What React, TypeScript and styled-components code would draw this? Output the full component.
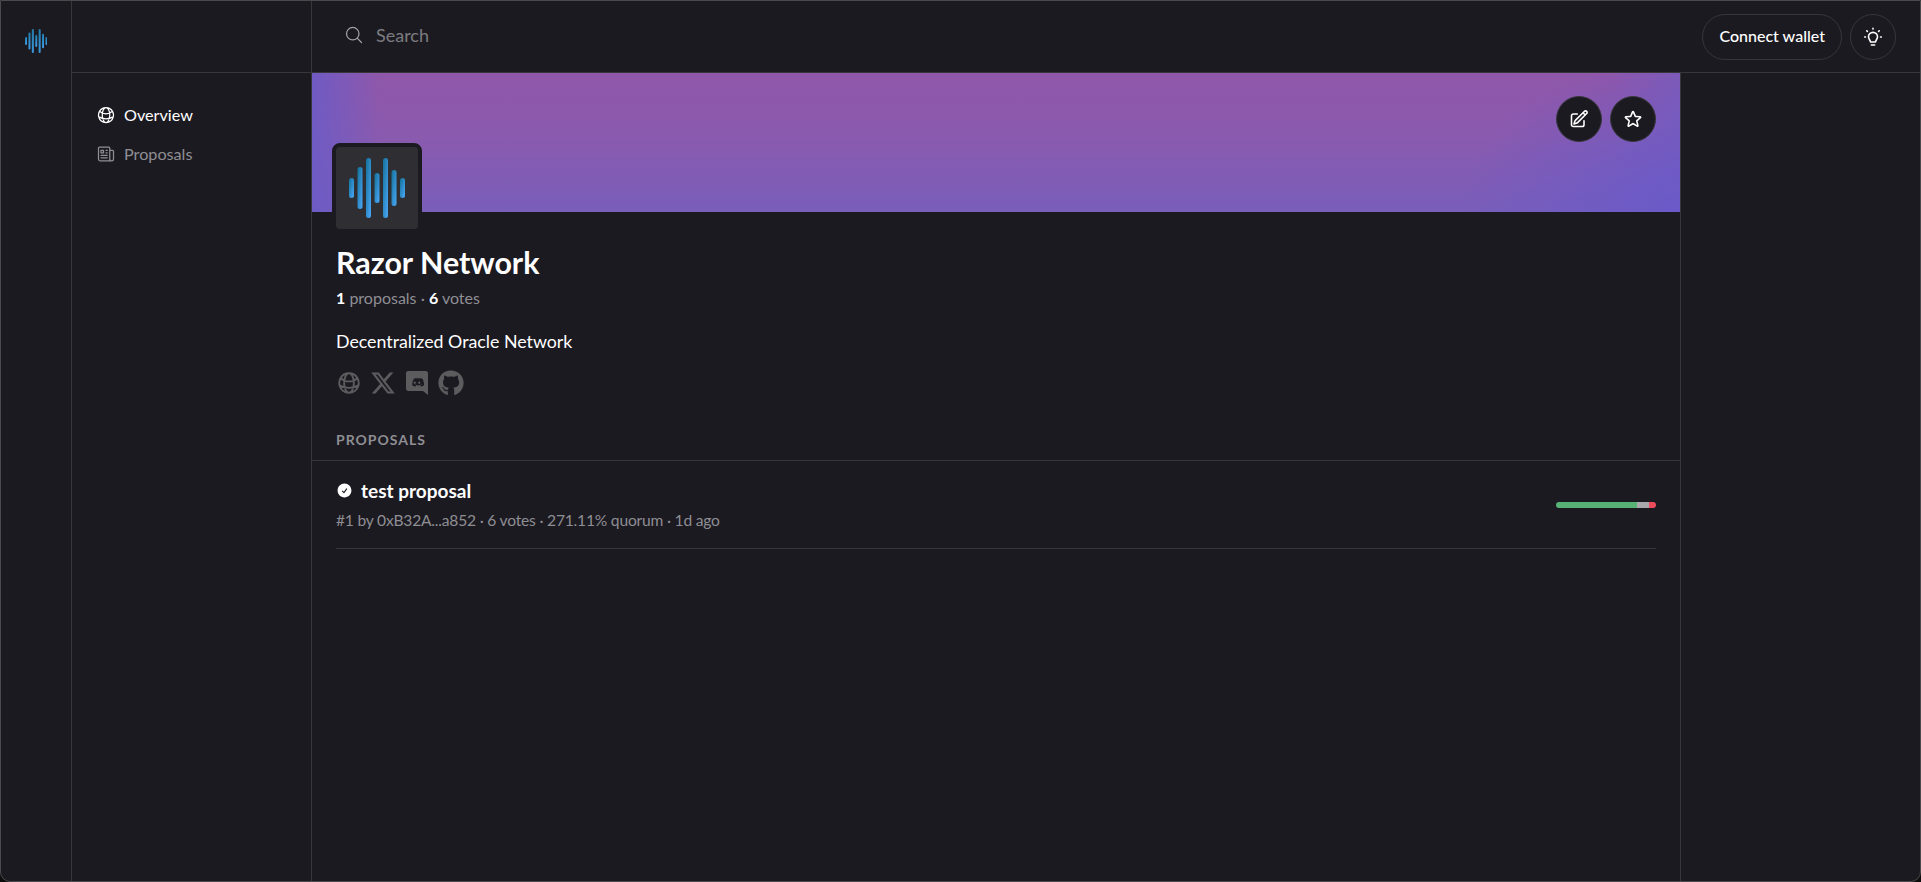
import { FC } from "react";
import styled, { createGlobalStyle } from "styled-components";
import {
  HiOutlineGlobeAlt,
  HiOutlineNewspaper,
  HiOutlineMagnifyingGlass,
  HiOutlinePencilSquare,
  HiOutlineStar,
  HiCheckCircle,
} from "react-icons/hi2";
import { FaXTwitter, FaGithub } from "react-icons/fa6";

const GlobalStyle = createGlobalStyle`
  html, body {
    margin: 0;
    padding: 0;
    background: #0c0c0d;
  }
  body {
    font-family: "Lato", "Liberation Sans", sans-serif;
    color: #fff;
  }
`;

const Page = styled.div`
  width: 1921px;
  height: 882px;
  box-sizing: border-box;
  display: flex;
  overflow: hidden;
  background: #1c1a21;
  border: 1px solid #4a4a4c;
  border-radius: 0 0 10px 10px;
`;

const Rail = styled.div`
  width: 71px;
  flex: none;
  box-sizing: border-box;
  border-right: 1px solid #37373a;
  display: flex;
  justify-content: center;
  padding-top: 28px;
`;

const Column = styled.div`
  flex: 1;
  min-width: 0;
  display: flex;
  flex-direction: column;
`;

const TopBar = styled.div`
  height: 72px;
  flex: none;
  box-sizing: border-box;
  border-bottom: 1px solid #37373a;
  display: flex;
  align-items: center;
`;

const TopSpacer = styled.div`
  width: 240px;
  height: 100%;
  flex: none;
  box-sizing: border-box;
  border-right: 1px solid #37373a;
`;

const SearchBox = styled.div`
  flex: 1;
  display: flex;
  align-items: center;
  gap: 12px;
  padding: 0 0 4px 32px;
  color: #7c7c80;
  font-size: 18px;
  svg {
    width: 20px;
    height: 20px;
    color: #a0a0a5;
  }
`;

const WalletButton = styled.button`
  height: 46px;
  padding: 0 16px 2px;
  background: transparent;
  border: 1px solid #37373a;
  border-radius: 23px;
  color: #fff;
  font: 500 16px "Lato", sans-serif;
`;

const ThemeButton = styled.button`
  width: 46px;
  height: 46px;
  margin: 0 24px 0 8px;
  padding: 0;
  display: flex;
  align-items: center;
  justify-content: center;
  background: transparent;
  border: 1px solid #37373a;
  border-radius: 50%;
  color: #fff;
`;

const Body = styled.div`
  flex: 1;
  display: flex;
  min-height: 0;
`;

const SideNav = styled.nav`
  width: 240px;
  flex: none;
  box-sizing: border-box;
  border-right: 1px solid #37373a;
  padding-top: 22px;
`;

const NavItem = styled.a<{ $active?: boolean }>`
  height: 39px;
  display: flex;
  align-items: center;
  gap: 8px;
  padding-left: 24px;
  font-size: 16.2px;
  color: ${(p) => (p.$active ? "#fff" : "#8e8e93")};
  svg {
    width: 20px;
    height: 20px;
  }
`;

const Main = styled.main`
  width: 1369px;
  flex: none;
  box-sizing: border-box;
  border-right: 1px solid #37373a;
`;

const Banner = styled.div`
  height: 139px;
  position: relative;
  background:
    linear-gradient(90deg, rgba(108, 91, 198, 0.9) 0%, rgba(108, 91, 198, 0) 5%),
    radial-gradient(ellipse 16% 110% at 100% 100%, #6a5ac8 0%, rgba(106, 90, 200, 0) 100%),
    linear-gradient(270deg, rgba(122, 91, 186, 0.8) 0%, rgba(122, 91, 186, 0) 5%),
    linear-gradient(180deg, #8f57aa 0%, #8a5aae 45%, #795eb9 100%);
`;

const BannerActions = styled.div`
  position: absolute;
  top: 23px;
  right: 24px;
  display: flex;
  gap: 8px;
`;

const RoundButton = styled.button`
  width: 46px;
  height: 46px;
  padding: 0;
  display: flex;
  align-items: center;
  justify-content: center;
  background: #1c1a21;
  border: 1px solid #37373a;
  border-radius: 50%;
  color: #fff;
  svg {
    width: 20px;
    height: 20px;
    stroke-width: 1.9;
  }
`;

const Avatar = styled.div`
  position: absolute;
  left: 20px;
  top: 70px;
  width: 90px;
  height: 90px;
  box-sizing: border-box;
  border: 4px solid #1c1a21;
  border-radius: 8px;
  background: #2f2f33;
  display: flex;
  align-items: center;
  justify-content: center;
`;

const Info = styled.div`
  padding: 32px 24px 0;
`;

const Title = styled.h1`
  margin: 0;
  font-size: 30.4px;
  line-height: 36px;
  font-weight: 700;
`;

const Stats = styled.div`
  margin-top: 7px;
  font-size: 16px;
  line-height: 22px;
  color: #8e8e93;
  b {
    color: #fff;
    font-weight: 700;
  }
`;

const Description = styled.p`
  margin: 20px 0 0;
  font-size: 17.8px;
  line-height: 24px;
  color: #fff;
`;

const Socials = styled.div`
  margin-top: 17px;
  display: flex;
  align-items: center;
  gap: 8px;
  color: #5c5c5f;
  svg {
    width: 26px;
    height: 26px;
    display: block;
    stroke-width: 1.8;
  }
`;

const SectionLabel = styled.div`
  margin-top: 35px;
  padding: 0 24px 11px;
  font-size: 14px;
  line-height: 18px;
  font-weight: 700;
  letter-spacing: 1px;
  color: #8e8e93;
  border-bottom: 1px solid #37373a;
`;

const ProposalRow = styled.div`
  margin: 0 24px;
  height: 88px;
  box-sizing: border-box;
  border-bottom: 1px solid #37373a;
  display: flex;
  align-items: center;
  justify-content: space-between;
`;

const ProposalTitle = styled.div`
  display: flex;
  align-items: center;
  gap: 8px;
  font-size: 19px;
  line-height: 24px;
  font-weight: 700;
  svg {
    width: 17px;
    height: 17px;
  }
`;

const ProposalMeta = styled.div`
  margin-top: 6px;
  font-size: 15.6px;
  line-height: 22px;
  letter-spacing: -0.2px;
  color: #8e8e93;
`;

const VoteBar = styled.div`
  width: 100px;
  height: 6px;
  display: flex;
  overflow: hidden;
  border-radius: 3px;
`;

const VoteSegment = styled.div<{ $color: string; $size: number }>`
  width: ${(p) => p.$size}%;
  background: ${(p) => p.$color};
`;

const LogoWave: FC<{ height: number; id: string }> = ({ height, id }) => (
  <svg width={(height * 56) / 60} height={height} viewBox="0 0 56 60" fill={`url(#${id})`}>
    <defs>
      <linearGradient id={id} x1="0" y1="0" x2="1" y2="1">
        <stop offset="0" stopColor="#137096" />
        <stop offset="1" stopColor="#4ba8fa" />
      </linearGradient>
    </defs>
    <rect x="0" y="20" width="5" height="20" rx="2.5" />
    <rect x="8.5" y="9" width="5" height="42" rx="2.5" />
    <rect x="17" y="0" width="5" height="60" rx="2.5" />
    <rect x="25.5" y="15" width="5" height="30" rx="2.5" />
    <rect x="34" y="0" width="5" height="60" rx="2.5" />
    <rect x="42.5" y="12" width="5" height="36" rx="2.5" />
    <rect x="51" y="20" width="5" height="20" rx="2.5" />
  </svg>
);

const BulbIcon: FC = () => (
  <svg width="20" height="20" viewBox="0 0 24 24" fill="none" stroke="currentColor" strokeWidth="1.9" strokeLinecap="round" strokeLinejoin="round">
    <path d="M9 18c0-2-2.400-3-2.400-6.200a5.400 5.400 0 0 1 10.800 0c0 3.200-2.400 4.200-2.400 6.200z" />
    <path d="M10 21.500h4" />
    <path d="M12 1.500v1M4.500 4.500l.8.800M19.500 4.500l-.8.800M2 12h1M21 12h1" />
  </svg>
);

const DiscordIcon: FC = () => (
  <svg viewBox="-1 0 26 26" fill="currentColor">
    <path fillRule="evenodd" d="M3.200 1h17.600C22 1 23 2 23 3.200V25l-5-4H3.200C2 21 1 20 1 18.800V3.200C1 2 2 1 3.200 1zM15 15.500l.7.900c2.300-.1 3.400-1.500 3.400-1.500 0-3.300-1.500-6-1.500-6-1.500-1.100-2.900-1.100-2.900-1.100l-.2.200c1.700.5 2.500 1.300 2.500 1.300-2.400-1.300-5.600-1.300-8 0 0 0 .8-.8 2.700-1.300l-.1-.2s-1.400 0-2.900 1.100c0 0-1.500 2.700-1.500 6 0 0 1 1.400 3.400 1.500l.7-.9c-1.300-.4-1.800-1.200-1.800-1.200 2.400 1.500 5.400 1.500 7.800 0 0 0-.5.800-1.800 1.200zM9.700 11.600c-.6 0-1.100.6-1.100 1.200s.5 1.200 1.100 1.200 1.100-.6 1.100-1.200-.5-1.200-1.100-1.200zm4.600 0c-.6 0-1.100.6-1.100 1.200s.5 1.200 1.100 1.200 1.100-.6 1.100-1.200-.5-1.200-1.100-1.200z" />
  </svg>
);

const App: FC = () => {
  return (
    <>
      <GlobalStyle />
      <Page>
        <Rail>
          <LogoWave height={24} id="railWave" />
        </Rail>
        <Column>
          <TopBar>
            <TopSpacer />
            <SearchBox>
              <HiOutlineMagnifyingGlass />
              Search
            </SearchBox>
            <WalletButton>Connect wallet</WalletButton>
            <ThemeButton>
              <BulbIcon />
            </ThemeButton>
          </TopBar>
          <Body>
            <SideNav>
              <NavItem $active>
                <HiOutlineGlobeAlt />
                Overview
              </NavItem>
              <NavItem>
                <HiOutlineNewspaper />
                Proposals
              </NavItem>
            </SideNav>
            <Main>
              <Banner>
                <Avatar>
                  <LogoWave height={60} id="avatarWave" />
                </Avatar>
                <BannerActions>
                  <RoundButton>
                    <HiOutlinePencilSquare />
                  </RoundButton>
                  <RoundButton>
                    <HiOutlineStar />
                  </RoundButton>
                </BannerActions>
              </Banner>
              <Info>
                <Title>Razor Network</Title>
                <Stats>
                  <b>1</b> proposals · <b>6</b> votes
                </Stats>
                <Description>Decentralized Oracle Network</Description>
                <Socials>
                  <HiOutlineGlobeAlt />
                  <FaXTwitter />
                  <DiscordIcon />
                  <FaGithub />
                </Socials>
              </Info>
              <SectionLabel>PROPOSALS</SectionLabel>
              <ProposalRow>
                <div>
                  <ProposalTitle>
                    <HiCheckCircle />
                    test proposal
                  </ProposalTitle>
                  <ProposalMeta>#1 by 0xB32A...a852 · 6 votes · 271.11% quorum · 1d ago</ProposalMeta>
                </div>
                <VoteBar>
                  <VoteSegment $color="#57b375" $size={81} />
                  <VoteSegment $color="#a8a8ad" $size={12} />
                  <VoteSegment $color="#eb4c5b" $size={7} />
                </VoteBar>
              </ProposalRow>
            </Main>
          </Body>
        </Column>
      </Page>
    </>
  );
};

export default App;
